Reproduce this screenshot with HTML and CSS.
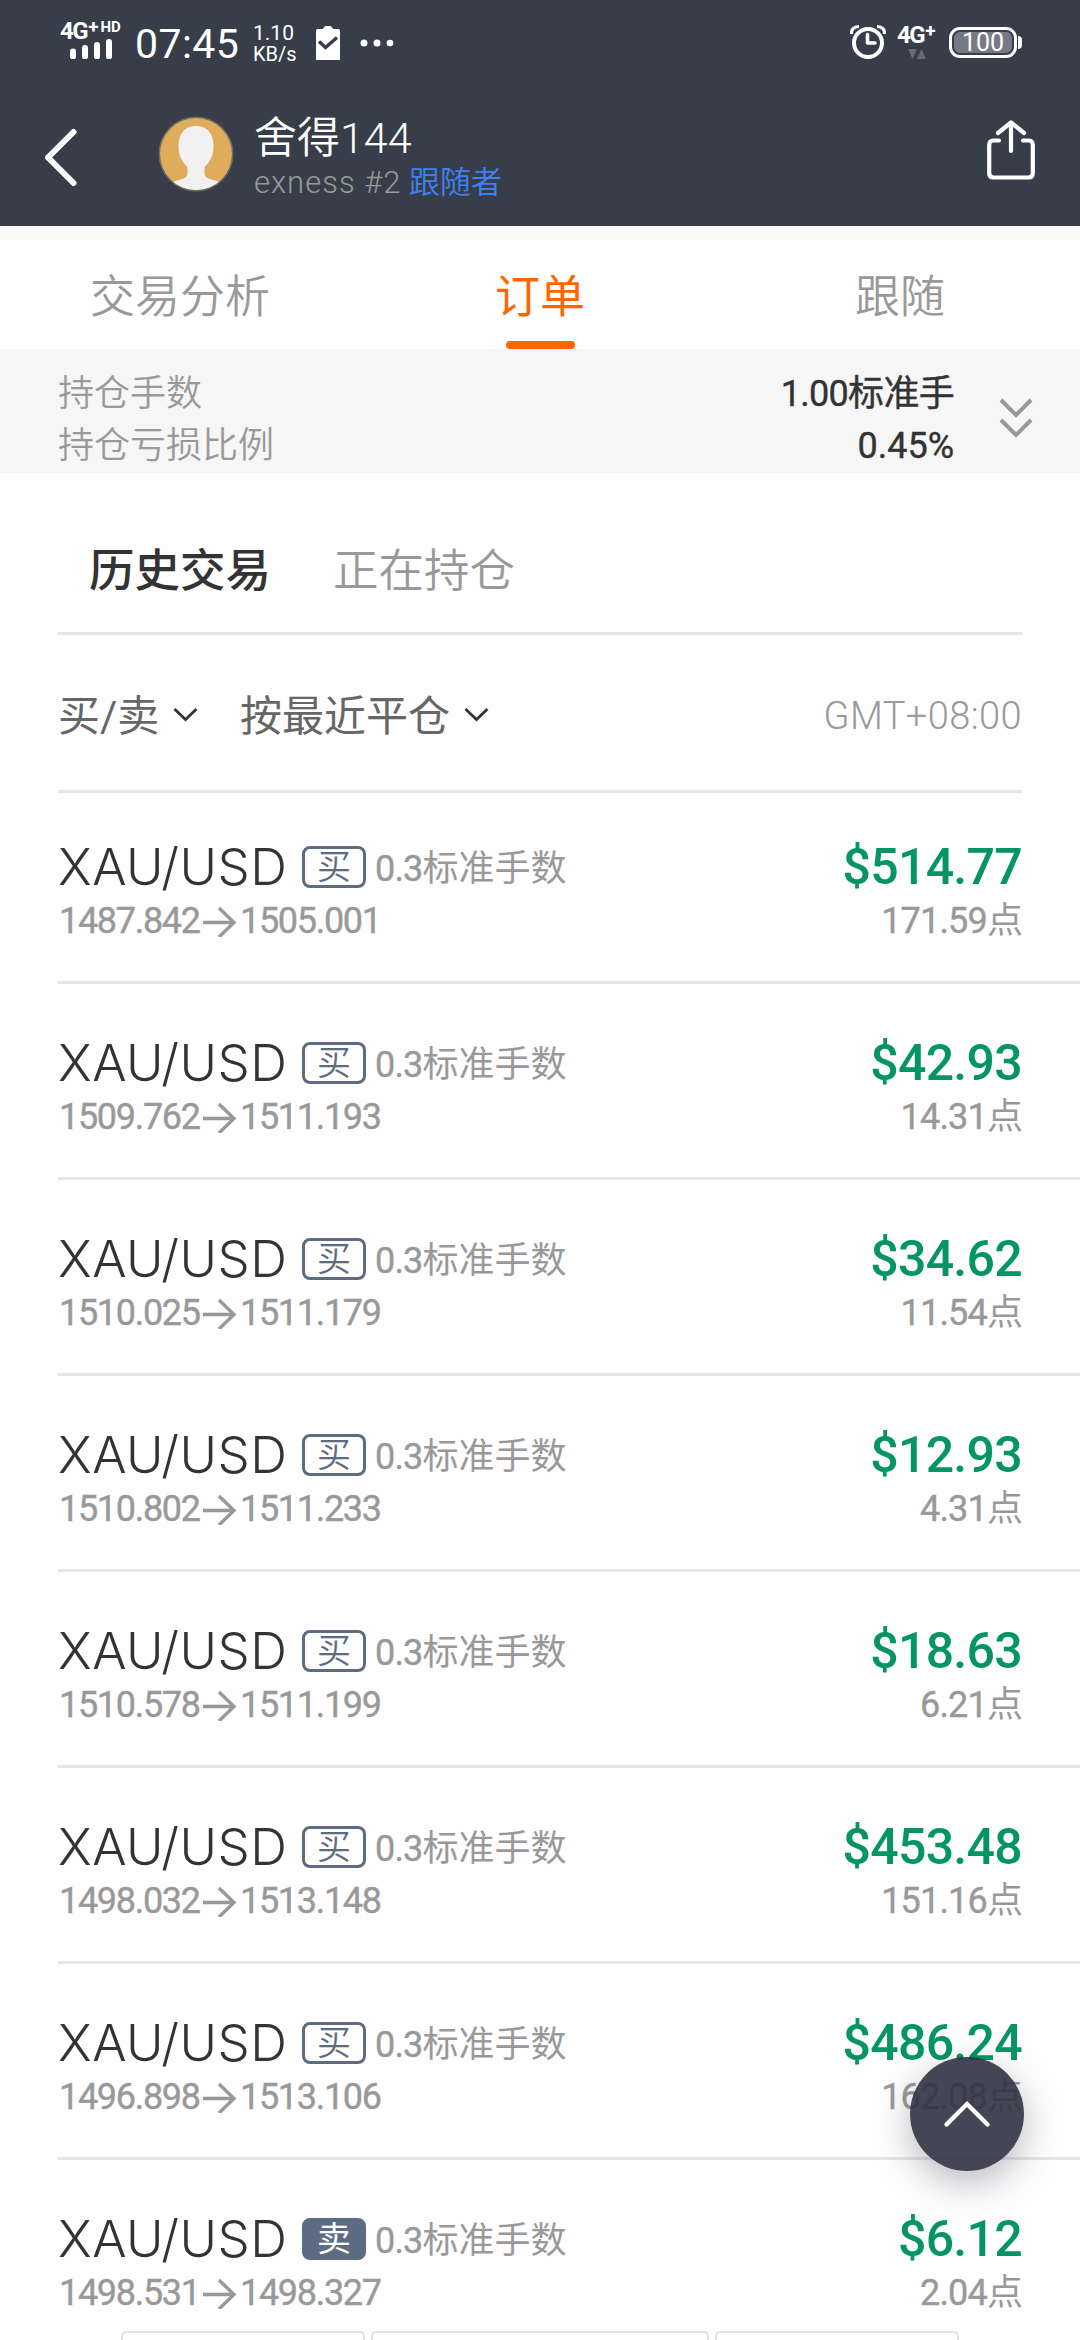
FILE: index.html
```html
<!DOCTYPE html>
<html lang="zh-CN">
<head>
<meta charset="utf-8">
<title>舍得144</title>
<link rel="stylesheet" href="styles.css">
</head>
<body>
<svg class="defs" width="0" height="0">
  <symbol id="arrow" viewBox="0 0 34 32"><path d="M0 17.5H31M16 3L31 17.5L16 32" fill="none" stroke="#999" stroke-width="3.400"/></symbol>
  <symbol id="down" viewBox="0 0 25 15"><path d="M1.5 2L12.5 12.5L23.5 2" fill="none" stroke="#333" stroke-width="2.800"/></symbol>
</svg>
<div class="screen">
  <header class="header">
    <div class="status">
      <div class="signal">
        <div class="net">4G<sup class="plus">+</sup><sup class="hd">HD</sup></div>
        <svg width="42" height="20"><path d="M3 12.5v5M15 9v8.500M27 6v11.500M39 3v14.500" stroke="#fff" stroke-width="6" stroke-linecap="round"/></svg>
      </div>
      <div class="time">07:45</div>
      <div class="speed"><span>1.10</span><span>KB/s</span></div>
      <svg class="clip" width="24" height="34" viewBox="0 0 24 34"><path d="M1.500 3H7Q8 0 10 0H14Q16 0 17 3H22.500Q24 3 24 5V34H0V5Q0 3 1.500 3Z" fill="#fff"/><path d="M3 15.500L9.500 21.500L21 11.500" fill="none" stroke="#383e49" stroke-width="3.500"/></svg>
      <svg class="dots" width="34" height="8" fill="#fff"><circle cx="4" cy="4" r="3.500"/><circle cx="17" cy="4" r="3.500"/><circle cx="30" cy="4" r="3.300"/></svg>
      <svg class="alarm" width="36" height="36" viewBox="0 0 36 36" fill="none" stroke="#fff"><circle cx="18" cy="19" r="14" stroke-width="4"/><path d="M17.500 10.500V19H25" stroke-width="3.600" stroke-linecap="round" stroke-linejoin="round"/><path d="M1.500 10Q1 3 9 2.500M27 2.500Q35 3 34.500 10" stroke-width="3.200"/></svg>
      <div class="mobile"><div class="net">4G<sup class="plus">+</sup></div><svg width="18" height="10" fill="#676c76"><path d="M0 0H9L4.500 10ZM9 10H18L13.500 0Z"/></svg></div>
      <div class="battery"><div class="level">100</div></div><div class="nub"></div>
    </div>
    <div class="nav">
      <svg class="back" width="36" height="62" viewBox="0 0 36 62"><path d="M30.500 5L5 30.500L30.500 56" fill="none" stroke="#fff" stroke-width="6" stroke-linecap="round" stroke-linejoin="round"/></svg>
      <svg class="avatar" width="76" height="76" viewBox="0 0 76 76"><defs><clipPath id="face"><circle cx="38" cy="38" r="36"/></clipPath></defs><circle cx="38" cy="38" r="36.700" fill="#deac5a" stroke="#6c6a63" stroke-width="1.600"/><path clip-path="url(#face)" d="M38 10C49 10 55.500 17 55.500 30C55.500 40 52 46 46.500 51V57C46.500 63 53 63 62 66V80H14V66C23 63 29.500 63 29.500 57V51C24 46 20.500 40 20.500 30C20.500 17 27 10 38 10Z" fill="#f1f1f1"/></svg>
      <div class="who">
        <div class="name">舍得144</div>
        <div class="broker"><span class="ex">exness #2</span><span class="role">跟随者</span></div>
      </div>
      <svg class="share" width="48" height="60" viewBox="0 0 48 60" fill="none" stroke="#fff" stroke-width="4.200" stroke-linecap="round" stroke-linejoin="round"><path d="M12 20.500H6.500Q2.200 20.500 2.200 25V53Q2.200 57.500 6.500 57.500H41.500Q45.800 57.500 45.800 53V25Q45.800 20.500 41.500 20.500H36M24 31V2.500M11 13L24 2.500L37 13"/></svg>
    </div>
  </header>
  <nav class="tabs">
    <div class="tab">交易分析</div>
    <div class="tab active">订单</div>
    <div class="tab">跟随</div>
  </nav>
  <section class="summary">
    <div class="labels"><div>持仓手数</div><div>持仓亏损比例</div></div>
    <div class="values"><div class="lots">1.00标准手</div><div>0.45%</div></div>
    <svg width="34" height="42" viewBox="0 0 34 42" fill="none" stroke="#999" stroke-width="4"><path d="M2 2L17 17L32 2M2 22L17 37L32 22"/></svg>
  </section>
  <section class="modes"><div class="mode on">历史交易</div><div class="mode">正在持仓</div></section>
  <section class="filters">
    <div class="filter">买/卖</div><svg width="25" height="15"><use href="#down"/></svg>
    <div class="filter second">按最近平仓</div><svg width="25" height="15"><use href="#down"/></svg>
    <div class="zone">GMT+08:00</div>
  </section>
  <main class="orders">
    <article class="order"><div class="top"><span class="pair">XAU/USD</span><span class="side">买</span><span class="size"><span class="num">0.3</span>标准手数</span><span class="profit">$514.77</span></div><div class="bottom"><span class="price">1487.842</span><svg width="34" height="32"><use href="#arrow"/></svg><span class="price">1505.001</span><span class="points"><span class="num">171.59</span>点</span></div></article>
    <article class="order"><div class="top"><span class="pair">XAU/USD</span><span class="side">买</span><span class="size"><span class="num">0.3</span>标准手数</span><span class="profit">$42.93</span></div><div class="bottom"><span class="price">1509.762</span><svg width="34" height="32"><use href="#arrow"/></svg><span class="price">1511.193</span><span class="points"><span class="num">14.31</span>点</span></div></article>
    <article class="order"><div class="top"><span class="pair">XAU/USD</span><span class="side">买</span><span class="size"><span class="num">0.3</span>标准手数</span><span class="profit">$34.62</span></div><div class="bottom"><span class="price">1510.025</span><svg width="34" height="32"><use href="#arrow"/></svg><span class="price">1511.179</span><span class="points"><span class="num">11.54</span>点</span></div></article>
    <article class="order"><div class="top"><span class="pair">XAU/USD</span><span class="side">买</span><span class="size"><span class="num">0.3</span>标准手数</span><span class="profit">$12.93</span></div><div class="bottom"><span class="price">1510.802</span><svg width="34" height="32"><use href="#arrow"/></svg><span class="price">1511.233</span><span class="points"><span class="num">4.31</span>点</span></div></article>
    <article class="order"><div class="top"><span class="pair">XAU/USD</span><span class="side">买</span><span class="size"><span class="num">0.3</span>标准手数</span><span class="profit">$18.63</span></div><div class="bottom"><span class="price">1510.578</span><svg width="34" height="32"><use href="#arrow"/></svg><span class="price">1511.199</span><span class="points"><span class="num">6.21</span>点</span></div></article>
    <article class="order"><div class="top"><span class="pair">XAU/USD</span><span class="side">买</span><span class="size"><span class="num">0.3</span>标准手数</span><span class="profit">$453.48</span></div><div class="bottom"><span class="price">1498.032</span><svg width="34" height="32"><use href="#arrow"/></svg><span class="price">1513.148</span><span class="points"><span class="num">151.16</span>点</span></div></article>
    <article class="order"><div class="top"><span class="pair">XAU/USD</span><span class="side">买</span><span class="size"><span class="num">0.3</span>标准手数</span><span class="profit">$486.24</span></div><div class="bottom"><span class="price">1496.898</span><svg width="34" height="32"><use href="#arrow"/></svg><span class="price">1513.106</span><span class="points"><span class="num">162.08</span>点</span></div></article>
    <article class="order"><div class="top"><span class="pair">XAU/USD</span><span class="side sell">卖</span><span class="size"><span class="num">0.3</span>标准手数</span><span class="profit">$6.12</span></div><div class="bottom"><span class="price">1498.531</span><svg width="34" height="32"><use href="#arrow"/></svg><span class="price">1498.327</span><span class="points"><span class="num">2.04</span>点</span></div></article>
  </main>
  <div class="dock"><div></div><div class="mid"></div><div></div></div>
  <div class="to-top"><svg width="48" height="28" viewBox="0 0 48 28"><path d="M3.500 24.500L24 4L44.500 24.500" fill="none" stroke="#fff" stroke-width="4.400" stroke-linecap="round"/></svg></div>
</div>
</body>
</html>
```
FILE: styles.css
```css
* { box-sizing: border-box; }
body { margin: 0; background: #fefefe; font-family: Roboto, "Noto Sans CJK SC", sans-serif; color: #333; }
svg { display: block; flex: none; }
.defs { position: absolute; }
.screen { position: relative; width: 1080px; height: 2340px; overflow: hidden; background: #fefefe; }

.header { height: 226px; background: #383e49; color: #fff; }
.status { display: flex; height: 86px; align-items: flex-start; padding-left: 60px; }
.signal { width: 75px; padding-top: 19px; }
.signal svg { margin: -4px 0 0 10px; }
.net { display: flex; align-items: flex-start; height: 24px; font: 700 24px/24px Roboto, sans-serif; letter-spacing: -1.5px; }
.plus { font-size: 19px; line-height: 15px; letter-spacing: 0; margin-left: 1px; }
.hd { font-size: 15px; line-height: 16px; letter-spacing: 0; margin-left: 2px; }
.time { width: 118px; margin-top: 20px; font-size: 41px; line-height: 49px; letter-spacing: 0.4px; }
.speed { display: flex; flex-direction: column; width: 63px; margin-top: 22px; font-size: 21px; line-height: 23px; }
.speed span + span { font-size: 20px; line-height: 18px; }
.clip { margin-top: 26px; }
.dots { margin: 39px 0 0 20px; }
.alarm { margin: 24px 0 0 456px; }
.mobile { width: 38px; margin: 23px 0 0 11px; }
.mobile svg { margin: 2px 0 0 11px; }
.battery { width: 68px; height: 31px; margin: 27px 0 0 14px; padding: 2px; border: 3px solid #fff; border-radius: 11px; }
.level { height: 21px; border-radius: 6px; background: #777984; text-align: center; font-size: 25px; line-height: 22px; }
.nub { width: 4px; height: 13px; margin: 36px 0 0 1px; border-radius: 0 4px 4px 0; background: #fff; }
.nav { display: flex; height: 140px; padding-left: 43px; align-items: flex-start; }
.back { margin-top: 41px; }
.avatar { margin: 30px 0 0 79px; }
.who { width: 753px; padding: 25px 0 0 20px; }
.name { font: 350 43px/54px Roboto, "Noto Sans CJK SC", sans-serif; }
.broker { display: flex; height: 36px; gap: 9px; font-weight: 350; font-size: 31px; line-height: 36px; }
.ex { width: 146px; color: #999; white-space: nowrap; letter-spacing: 1px; }
.role { color: #3d82f5; }
.share { margin-top: 34px; }

.tabs { display: grid; grid-template-columns: repeat(3, 1fr); height: 123px; border-top: 14px solid #fafafa; background: #fff; }
.tab { display: flex; flex-direction: column; align-items: center; padding-top: 3px; height: 109px; font-size: 45px; line-height: 109px; font-weight: 350; color: #999; }
.active { color: #ff6500; font-weight: 400; }
.active::after { content: ""; flex: none; width: 69px; height: 8px; margin-top: -11px; border-radius: 4px; background: #ff6500; }

.summary { display: flex; height: 124px; padding: 19px 47px 0 58px; background: #f6f6f6; font-size: 36px; line-height: 52px; }
.labels { flex: 1; font-weight: 350; color: #999; }
.values { margin-right: 45px; text-align: right; font-weight: 400; -webkit-text-stroke: 0.4px; }
.lots { letter-spacing: -0.7px; }
.summary svg { margin-top: 30px; }

.modes { display: flex; gap: 62px; height: 162px; margin: 0 58px; padding: 55px 0 0 31px; border-bottom: 3px solid #e5e5ea; font-size: 45.500px; line-height: 88px; }
.mode { font-weight: 350; color: #999; }
.on { font-weight: 500; color: #333; }
.filters { display: flex; align-items: center; height: 158px; margin: 0 58px; border-bottom: 3px solid #e5e5ea; padding-top: 4px; }
.filter { width: 115px; padding-top: 5px; font-size: 42px; line-height: 70px; color: #666; white-space: nowrap; }
.second { width: 224px; margin-left: 42px; }
.zone { margin-left: auto; font: 300 38px/70px Roboto, sans-serif; letter-spacing: 0.4px; padding-top: 3px; color: #999; }

.orders { padding-left: 58px; }
.order { height: 196px; padding-top: 53px; border-bottom: 3px solid #e5e5ea; }
.order:first-child { height: 191px; padding-top: 48px; }
.order:last-child { border-bottom: 0; height: 171px; }
.top { display: flex; align-items: center; height: 52px; padding-right: 58px; }
.pair { width: 244px; font: 300 51px/52px Inter, sans-serif; letter-spacing: 0.5px; white-space: nowrap; }
.side { width: 64px; height: 42px; margin-right: 9px; border: 3px solid #5d6b83; border-radius: 8px; text-align: center; font-size: 34px; line-height: 36px; color: #5d6b83; font-weight: 350; }
.sell { background: #5d6b83; color: #fff; font-weight: 400; }
.size { display: flex; padding-top: 4px; font-size: 36px; line-height: 48px; color: #999; font-weight: 400; }
.num { letter-spacing: -0.8px; -webkit-text-stroke: 0.4px; }
.profit { margin-left: auto; font-size: 50px; font-weight: 500; letter-spacing: -0.7px; color: #059562; line-height: 52px; }
.bottom { display: flex; height: 44px; margin-top: 6px; padding: 0 57px 0 0; font-size: 36px; line-height: 44px; color: #999; }
.price { width: 145px; padding-left: 1px; letter-spacing: -1.300px; -webkit-text-stroke: 0.4px; }
.bottom svg { margin-top: 6px; }
.bottom svg + .price { padding-left: 3px; }
.points { display: flex; margin-left: auto; }

.dock { display: flex; gap: 6px; height: 14px; padding-left: 121px; }
.dock div { width: 244px; border: 2px solid #e3e3e5; border-bottom: 0; border-radius: 5px 5px 0 0; }
.dock .mid { width: 338px; }
.to-top { position: absolute; left: 910px; top: 2057px; display: flex; align-items: center; justify-content: center; width: 114px; height: 114px; border-radius: 57px; background: rgba(49, 50, 66, 0.9); box-shadow: 0 12px 36px rgba(60, 62, 80, 0.35); }
```
